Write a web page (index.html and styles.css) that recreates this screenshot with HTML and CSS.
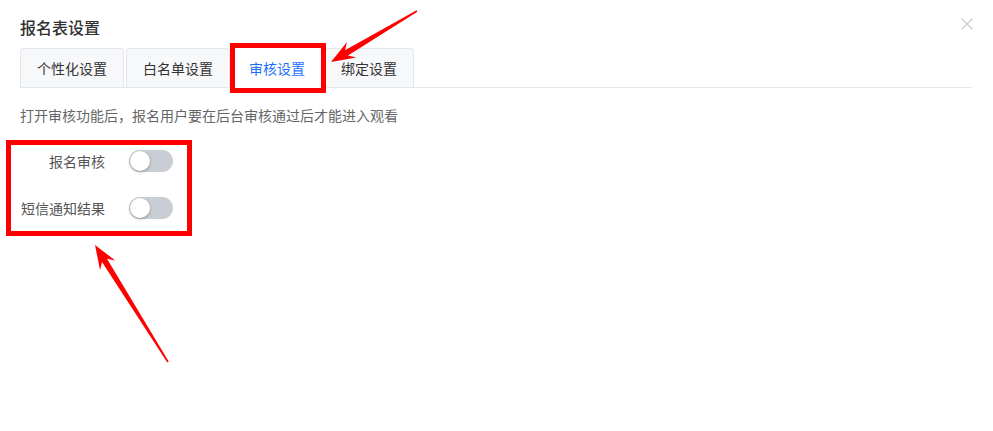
FILE: index.html
```html
<!DOCTYPE html>
<html lang="zh-CN">
<head>
    <meta charset="UTF-8">
    <title>报名表设置</title>
    <link rel="stylesheet" href="styles.css">
</head>
<body>
    <div class="dialog">
        <div class="dialog-header">
            <h2 class="dialog-title">报名表设置</h2>
            <button class="close-btn" aria-label="关闭">
                <svg width="12" height="12" viewBox="0 0 12 12">
                    <path d="M0.5 0.5 L11.5 11.5 M11.5 0.5 L0.5 11.5" stroke="#c8cbd1" stroke-width="1.2" fill="none"/>
                </svg>
            </button>
        </div>

        <!-- 标签页 -->
        <div class="tabs">
            <div class="tab">个性化设置</div>
            <div class="tab">白名单设置</div>
            <div class="tab active">审核设置</div>
            <div class="tab">绑定设置</div>
        </div>

        <p class="tip">打开审核功能后，报名用户要在后台审核通过后才能进入观看</p>

        <div class="form">
            <div class="form-row">
                <label class="form-label">报名审核</label>
                <span class="switch"><span class="knob"></span></span>
            </div>
            <div class="form-row">
                <label class="form-label">短信通知结果</label>
                <span class="switch"><span class="knob"></span></span>
            </div>
        </div>
    </div>

    <!-- 标注 -->
    <div class="mark mark-tab"></div>
    <div class="mark mark-form"></div>
    <svg class="arrows" width="993" height="431" viewBox="0 0 993 431">
        <polygon fill="#ff0000" points="331,62 356.2,57.5 348,55.4 417.4,11.7 416.6,10.3 345,50.2 347,42.1"/>
        <polygon fill="#ff0000" points="95,245 115.3,260.6 107,258.7 168.7,361.6 167.3,362.4 102,261.9 100.1,270.2"/>
    </svg>
</body>
</html>
```

FILE: styles.css
```css
:root {
    --text: #333;
    --muted: #666;
    --border: #e4e7ed;
    --primary: #1e6fff;
    --mark: #ff0000;
}

body {
    margin: 0;
    background: #fff;
    font-family: "Noto Sans CJK SC", "Noto Sans", sans-serif;
    color: var(--text);
    width: 993px;
    height: 431px;
    overflow: hidden;
    position: relative;
}

.dialog {
    padding: 16px 20px 0 20px;
}

.dialog-header {
    display: flex;
    justify-content: space-between;
    align-items: flex-start;
    height: 32px;
}

.dialog-title {
    margin: 0;
    font-size: 16px;
    font-weight: 500;
    line-height: 22px;
    color: #303133;
}

.close-btn {
    border: none;
    background: none;
    padding: 0;
    margin-top: 2px;
    width: 12px;
    height: 12px;
    cursor: pointer;
}

.tabs {
    display: flex;
    gap: 2px;
    margin-right: 1px;
    border-bottom: 1px solid var(--border);
}

.tab {
    height: 38px;
    line-height: 38px;
    padding: 0 16px;
    font-size: 14px;
    color: var(--text);
    background: #f7f8fa;
    border: 1px solid var(--border);
    border-bottom: none;
    border-radius: 4px 4px 0 0;
    margin-bottom: -1px;
}

.tab.active {
    background: #fff;
    color: var(--primary);
    border-color: #fff;
    height: 39px;
}

.tip {
    margin: 17px 0 20px;
    font-size: 14px;
    line-height: 20px;
    color: var(--muted);
}

.form {
    display: flex;
    flex-direction: column;
    gap: 15px;
}

.form-row {
    display: flex;
    align-items: center;
    height: 32px;
}

.form-label {
    width: 85px;
    padding-right: 24px;
    text-align: right;
    font-size: 14px;
    color: #555;
}

.switch {
    position: relative;
    width: 44px;
    height: 22px;
    border-radius: 11px;
    background: #c9cdd4;
}

.knob {
    position: absolute;
    left: 1px;
    top: 1px;
    width: 20px;
    height: 20px;
    border-radius: 50%;
    background: #fff;
    box-shadow: 0 1px 3px rgba(0, 0, 0, 0.3);
}

.mark {
    position: absolute;
    border: 5px solid var(--mark);
    box-sizing: border-box;
}

.mark-tab {
    left: 230px;
    top: 43px;
    width: 96px;
    height: 50px;
}

.mark-form {
    left: 6px;
    top: 140px;
    width: 186px;
    height: 96px;
}

.arrows {
    position: absolute;
    left: 0;
    top: 0;
    pointer-events: none;
}
```
